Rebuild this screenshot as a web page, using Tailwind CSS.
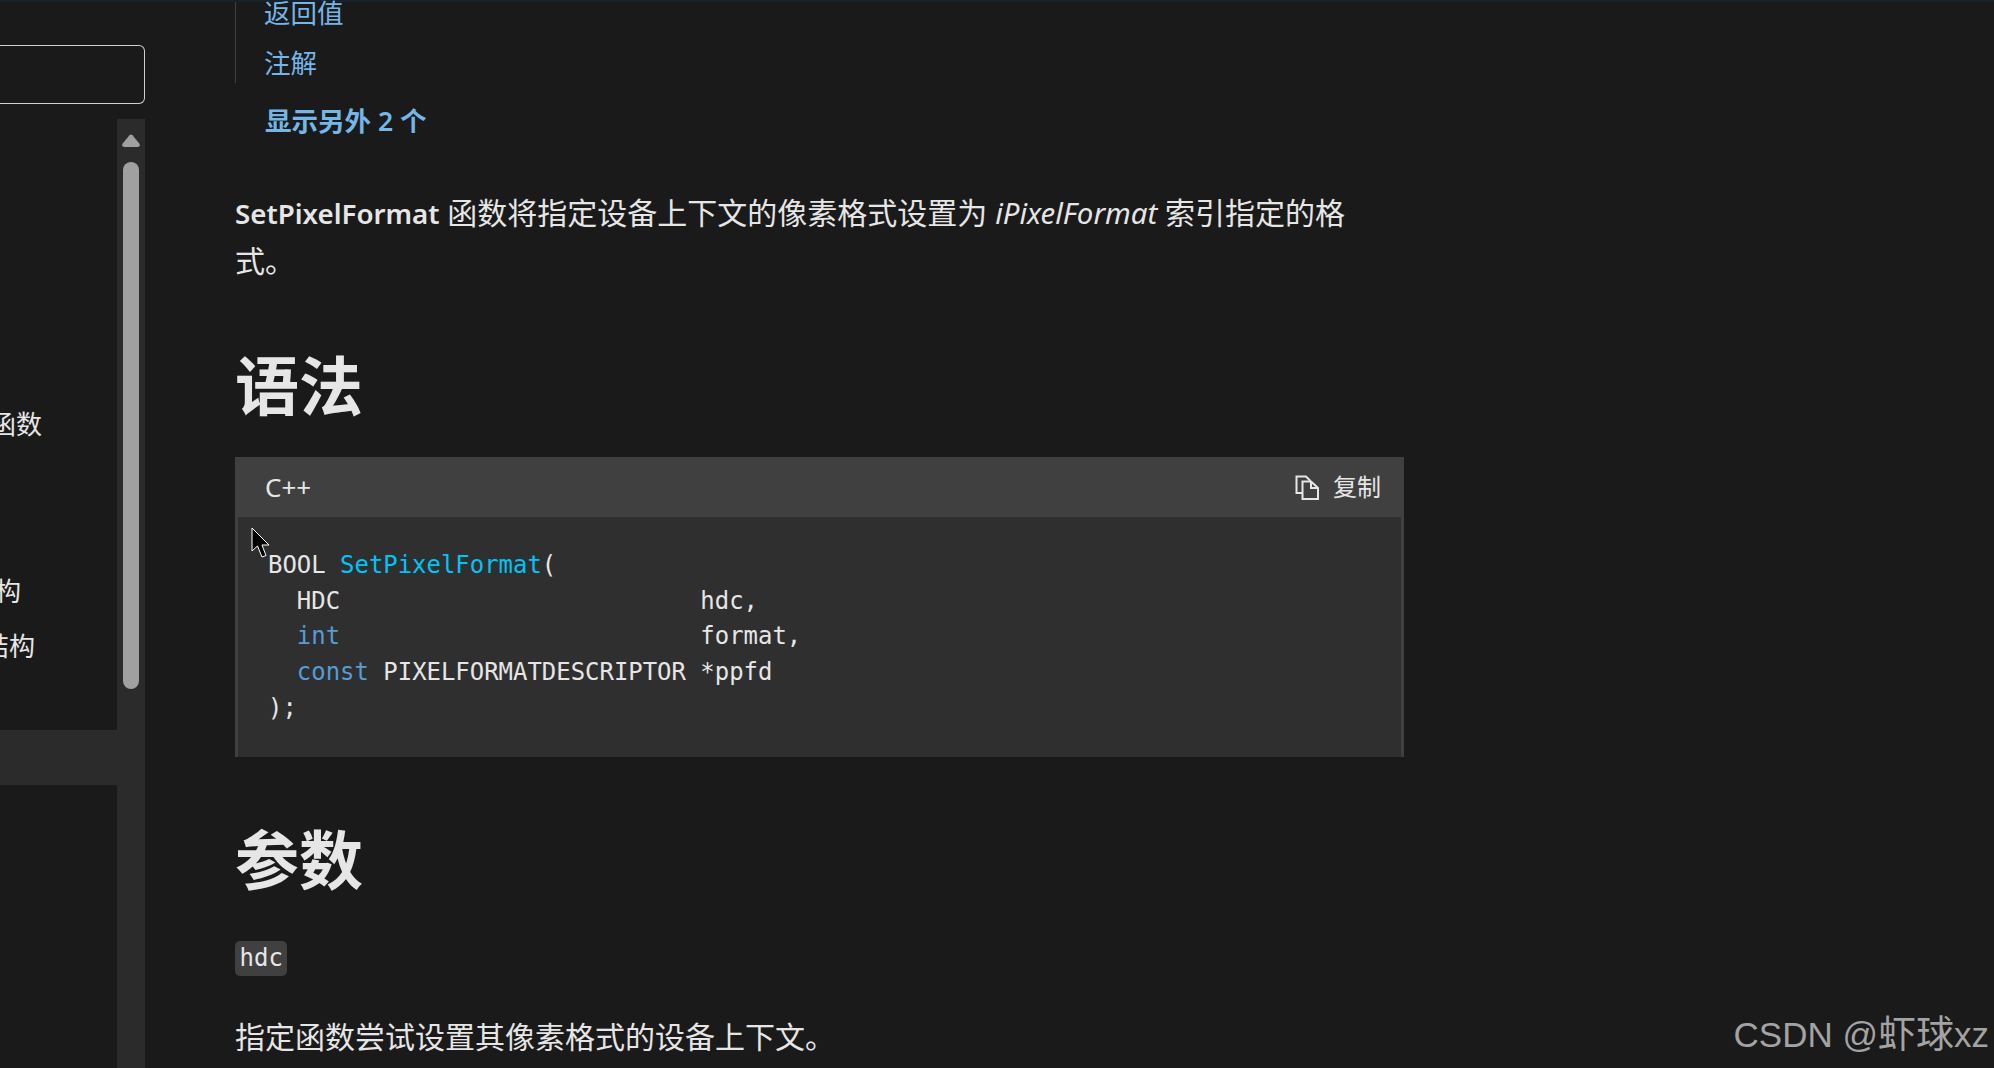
<!DOCTYPE html>
<html lang="zh-CN">
<head>
  <meta charset="UTF-8" />
  <title>SetPixelFormat 函数</title>
  <script src="https://cdn.jsdelivr.net/npm/@tailwindcss/browser@4"></script>
</head>
<body class="relative h-[1068px] overflow-hidden bg-[#1a1a1a] text-[#e6e6e6] font-['Noto_Sans','Noto_Sans_CJK_SC',sans-serif]">
  <div class="h-[2px] bg-[#17212b]"></div>
  <div class="flex h-[1066px]">

    <!-- Left nav -->
    <aside class="w-[145px] shrink-0 flex flex-col pt-[43px]">
      <div class="h-[59px] rounded-r-[6px] border border-l-0 border-[#d0d0d0]"></div>
      <div class="flex flex-1 mt-[15px] min-h-0">
        <ul class="w-[117px] text-[26px] overflow-hidden">
          <li class="h-[55.5px]"></li>
          <li class="h-[55.5px]"></li>
          <li class="h-[55.5px]"></li>
          <li class="h-[55.5px]"></li>
          <li class="h-[55.5px]"></li>
          <li class="h-[55.5px] flex items-center justify-end pr-[75px] whitespace-nowrap">函数</li>
          <li class="h-[55.5px]"></li>
          <li class="h-[55.5px]"></li>
          <li class="h-[55.5px] flex items-center justify-end pr-[96px] pt-[2px] whitespace-nowrap">构</li>
          <li class="h-[55.5px] flex items-center justify-end pr-[82px] whitespace-nowrap">结构</li>
          <li class="h-[55.5px]"></li>
          <li class="h-[55.5px] bg-[#2b2b2b]"></li>
        </ul>
        <div class="w-[28px] bg-[#2b2b2b] flex flex-col items-center pt-[15px]">
          <svg width="18" height="13" viewBox="0 0 18 13"><path d="M7.5 1.2 Q9 -.3 10.5 1.2 L17.3 9.5 Q18.8 13 15.5 13 L2.5 13 Q-.8 13 .7 9.5 Z" fill="#a0a0a0"/></svg>
          <div class="w-[16px] h-[527px] mt-[15px] rounded-full bg-[#a0a0a0]"></div>
        </div>
      </div>
    </aside>

    <!-- Article -->
    <main class="ml-[90px] w-[1169px]">
      <nav class="flex flex-col h-[81px] border-l border-[#404040] pl-[28px] text-[26.5px] leading-[50px] text-[#75b6e7]">
        <div class="-mt-[14px]">返回值</div>
        <div>注解</div>
      </nav>
      <div class="pl-[30px] mt-[13px] text-[26.5px] leading-[50px] font-semibold text-[#75b6e7]">显示另外 2 个</div>

      <p class="mt-[43px] w-[1124px] text-[30px] leading-[48px]"><b class="font-semibold text-[27.7px]">SetPixelFormat</b> 函数将指定设备上下文的像素格式设置为 <i class="text-[29.4px]">iPixelFormat</i> 索引指定的格式。</p>

      <h2 class="mt-[61px] text-[64px] leading-[80px] font-bold">语法</h2>

      <div class="mt-[31px] bg-[#404040]">
        <div class="h-[60px] flex items-center justify-between pl-[30px] pr-[23px] text-[24px]">
          <span class="text-[26px]">C++</span>
          <button class="flex items-center gap-[13px]">
            <svg width="25" height="25" viewBox="0 0 25 25" fill="none" stroke="#e6e6e6" stroke-width="2">
              <path d="M7 18 H1.5 V1.5 H11 L15.5 6"/>
              <path d="M7.5 6.5 H16 L23 13 V24 H7.5 Z"/>
              <path d="M16 6.5 V13 H23"/>
            </svg>
            <span>复制</span>
          </button>
        </div>
        <div class="mx-[3px] mb-[3px] bg-[#2f2f2f] px-[30px] pt-[31px] pb-[30px]">
          <pre class="font-['DejaVu_Sans_Mono',monospace] text-[23.95px] leading-[35.7px]">BOOL <span class="text-[#00c4f5]">SetPixelFormat</span>(
  HDC                         hdc,
  <span class="text-[#569cd6]">int</span>                         format,
  <span class="text-[#569cd6]">const</span> PIXELFORMATDESCRIPTOR *ppfd
);</pre>
        </div>
      </div>

      <h2 class="mt-[63px] text-[64px] leading-[80px] font-bold">参数</h2>

      <code class="block w-fit mt-[41px] h-[35px] px-[4.5px] rounded-[5px] bg-[#404040] font-['DejaVu_Sans_Mono',monospace] text-[24px] leading-[35px]">hdc</code>

      <p class="mt-[37px] text-[30px] leading-[48px]">指定函数尝试设置其像素格式的设备上下文。</p>
    </main>
  </div>

  <!-- mouse cursor -->
  <svg class="absolute left-[251px] top-[527px]" width="20" height="32" viewBox="0 0 20 32">
    <path d="M1 1 V24 L6.5 19 L11 30 L15 28.5 L11 18 H18 Z" fill="#000" stroke="#fff" stroke-width="1"/>
  </svg>

  <!-- watermark -->
  <div class="absolute right-[5px] top-[1012px] text-[35px] leading-[44px] text-[#a3a3a3] font-['Liberation_Sans','Noto_Sans_CJK_SC',sans-serif]">CSDN @<span class="text-[38px]">虾球</span>xz</div>
</body>
</html>
